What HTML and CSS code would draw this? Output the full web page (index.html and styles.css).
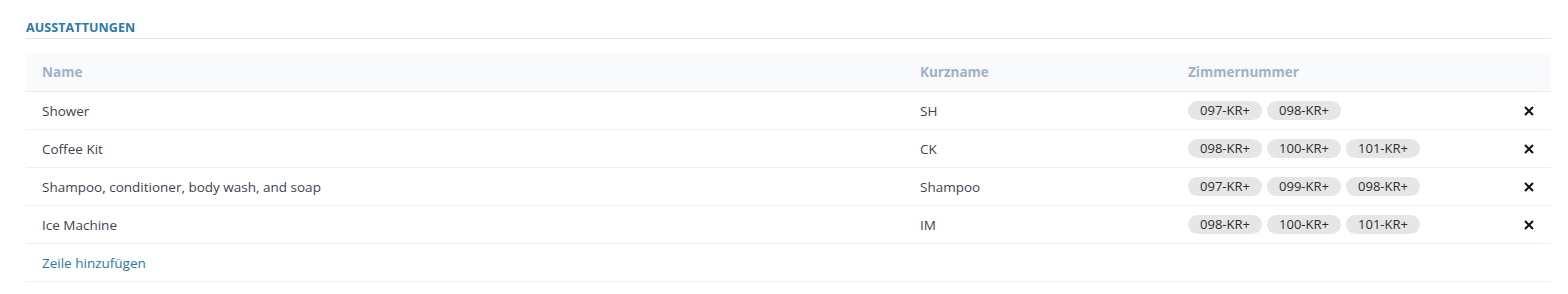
FILE: index.html
```html
<!DOCTYPE html>
<html lang="de">
<head>
<meta charset="utf-8">
<title>Ausstattungen</title>
<link rel="stylesheet" href="styles.css">
</head>
<body>
<section class="panel">
  <h2 class="title">AUSSTATTUNGEN</h2>
  <div class="table">
    <div class="row head">
      <div class="c-name">Name</div>
      <div class="c-short">Kurzname</div>
      <div class="c-rooms">Zimmernummer</div>
      <div class="c-act"></div>
    </div>
    <div class="row">
      <div class="c-name">Shower</div>
      <div class="c-short">SH</div>
      <div class="c-rooms"><span class="chip">097-KR+</span><span class="chip">098-KR+</span></div>
      <div class="c-act"><svg class="x" viewBox="0 0 10 10" width="10" height="10"><path d="M1 1L9 9M9 1L1 9"/></svg></div>
    </div>
    <div class="row">
      <div class="c-name">Coffee Kit</div>
      <div class="c-short">CK</div>
      <div class="c-rooms"><span class="chip">098-KR+</span><span class="chip">100-KR+</span><span class="chip">101-KR+</span></div>
      <div class="c-act"><svg class="x" viewBox="0 0 10 10" width="10" height="10"><path d="M1 1L9 9M9 1L1 9"/></svg></div>
    </div>
    <div class="row">
      <div class="c-name">Shampoo, conditioner, body wash, and soap</div>
      <div class="c-short">Shampoo</div>
      <div class="c-rooms"><span class="chip">097-KR+</span><span class="chip">099-KR+</span><span class="chip">098-KR+</span></div>
      <div class="c-act"><svg class="x" viewBox="0 0 10 10" width="10" height="10"><path d="M1 1L9 9M9 1L1 9"/></svg></div>
    </div>
    <div class="row">
      <div class="c-name">Ice Machine</div>
      <div class="c-short">IM</div>
      <div class="c-rooms"><span class="chip">098-KR+</span><span class="chip">100-KR+</span><span class="chip">101-KR+</span></div>
      <div class="c-act"><svg class="x" viewBox="0 0 10 10" width="10" height="10"><path d="M1 1L9 9M9 1L1 9"/></svg></div>
    </div>
    <div class="row add">
      <a class="add-link" href="#">Zeile hinzufügen</a>
    </div>
  </div>
</section>
</body>
</html>
```
FILE: styles.css
```css
html, body {
  margin: 0;
  padding: 0;
  background: #ffffff;
}
body {
  font-family: "Open Sans", "Liberation Sans", sans-serif;
  color: #3d4452;
}
.panel {
  padding: 19px 17px 0 26px;
}
.title {
  margin: 0;
  font-size: 12.5px;
  font-weight: 700;
  color: #2a7aa8;
  letter-spacing: 0.1px;
  line-height: 18px;
  padding-bottom: 1px;
  border-bottom: 1px solid #e2e4e7;
}
.table {
  margin-top: 14px;
}
.row {
  display: grid;
  grid-template-columns: 894px 268px 1fr 40px;
  height: 38px;
  align-items: center;
  border-bottom: 1px solid #eceff3;
  box-sizing: border-box;
  font-size: 13.5px;
}
.row > div:first-child {
  padding-left: 16px;
}
.head {
  height: 39px;
  background: #f8fafc;
  color: #a0b0c8;
  font-weight: 700;
  font-size: 13.5px;
  border-bottom: 1px solid #e8ecf1;
}
.c-rooms {
  display: flex;
  gap: 5px;
}
.chip {
  display: inline-block;
  width: 74px;
  height: 19px;
  line-height: 19px;
  border-radius: 10px;
  background: #e6e6e6;
  text-align: center;
  font-family: "Open Sans", "Liberation Sans", sans-serif;
  font-size: 13px;
  color: #2d2d2d;
}
.c-act {
  display: flex;
  align-items: center;
  padding-left: 13px;
}
.x {
  stroke: #111;
  stroke-width: 2;
  fill: none;
}
.add {
  display: flex;
  padding-left: 16px;
}
.add-link {
  color: #2a7aa8;
  text-decoration: none;
  font-size: 13.5px;
}
```
